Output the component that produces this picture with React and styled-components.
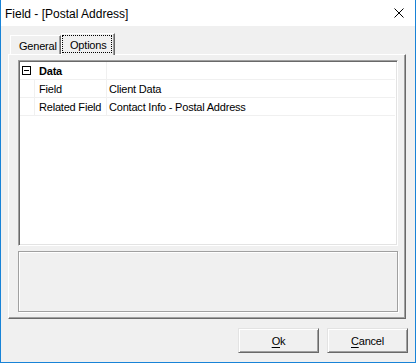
import React, { useState } from 'react'
import styled, { createGlobalStyle } from 'styled-components'

const GlobalStyle = createGlobalStyle`
  html, body {
    margin: 0;
    padding: 0;
    background: #ffffff;
  }
  * {
    box-sizing: border-box;
  }
`

const Window = styled.div`
  width: 416px;
  height: 363px;
  display: flex;
  flex-direction: column;
  background: #f0f0f0;
  border: 1px solid #1883d7;
  border-top: none;
  font-family: "Liberation Sans", Arial, sans-serif;
  font-size: 11px;
  letter-spacing: -0.2px;
  color: #000;
`

const TitleBar = styled.div`
  height: 26px;
  flex: none;
  background: #ffffff;
  display: flex;
  align-items: center;
  justify-content: space-between;
  padding: 0 11px 0 4px;
  font-size: 12px;
  letter-spacing: 0;
`

const Title = styled.span`
  padding-top: 1px;
`

const CloseIcon = () => (
  <svg width="10" height="10" viewBox="0 0 10 10">
    <path d="M0.5 0.5 L9.5 9.5 M9.5 0.5 L0.5 9.5" stroke="#000" strokeWidth="1" fill="none" />
  </svg>
)

const Body = styled.div`
  flex: 1;
  display: flex;
  flex-direction: column;
  padding: 7px 0 0 7px;
`

const TabStrip = styled.div`
  display: flex;
  align-items: flex-end;
  height: 21px;
  padding-left: 2px;
`

const Tab = styled.div`
  position: relative;
  height: ${p => (p.$active ? '22px' : '19px')};
  margin-bottom: ${p => (p.$active ? '-1px' : '0')};
  width: ${p => p.$width}px;
  background: #f0f0f0;
  border-top: 1px solid #ffffff;
  border-left: 1px solid #ffffff;
  border-right: 1px solid #696969;
  box-shadow: inset -1px 0 0 #a0a0a0;
  display: flex;
  padding: ${p => (p.$active ? '1px 2px 2px 0' : '0 2px 0 0')};
  z-index: ${p => (p.$active ? 2 : 1)};
  cursor: default;
`

const FocusRect = styled.span`
  flex: 1;
  display: flex;
  align-items: center;
  padding-left: ${p => p.$indent}px;
  padding-top: 1px;
  outline: ${p => (p.$focused ? '1px dotted #000' : 'none')};
  outline-offset: -1px;
`

const Panel = styled.div`
  position: relative;
  z-index: 1;
  width: 398px;
  height: 265px;
  display: flex;
  flex-direction: column;
  gap: 5px;
  padding: 5px 7px 6px 9px;
  border-top: 1px solid #ffffff;
  border-left: 1px solid #ffffff;
  border-right: 1px solid #696969;
  border-bottom: 1px solid #696969;
  box-shadow: inset -1px -1px 0 #a0a0a0;
`

const Grid = styled.div`
  height: 186px;
  width: 380px;
  background: #ffffff;
  border-top: 1px solid #a0a0a0;
  border-left: 1px solid #a0a0a0;
  border-right: 1px solid #ffffff;
  border-bottom: 1px solid #ffffff;
  box-shadow: inset 1px 1px 0 #696969, inset -1px -1px 0 #e3e3e3;
  padding: 1px 2px 0 1px;
  display: flex;
  flex-direction: column;
`

const Row = styled.div`
  display: grid;
  grid-template-columns: 15px 72px 1fr;
  height: 18px;
  border-bottom: 1px solid #f0f0f0;
`

const Cell = styled.div`
  display: flex;
  align-items: center;
  padding-left: ${p => p.$pad ?? 4}px;
  border-right: ${p => (p.$line ? '1px solid #f0f0f0' : 'none')};
  font-weight: ${p => (p.$bold ? 700 : 400)};
  white-space: nowrap;
  overflow: hidden;
`

const ExpandBox = styled.span`
  width: 9px;
  height: 9px;
  border: 1px solid #000;
  display: flex;
  align-items: center;
  justify-content: center;
  &::after {
    content: '';
    width: 5px;
    height: 1px;
    background: #000;
  }
`

const Description = styled.div`
  height: 61px;
  width: 380px;
  border: 1px solid #a0a0a0;
  box-shadow: 1px 1px 0 #ffffff, inset 1px 1px 0 #ffffff;
`

const ButtonRow = styled.div`
  display: flex;
  justify-content: flex-end;
  gap: 8px;
  padding: 9px 7px 0 0;
`

const Button = styled.button`
  width: 81px;
  height: 25px;
  background: #f0f0f0;
  font-family: "Liberation Sans", Arial, sans-serif;
  font-size: 11px;
  letter-spacing: -0.2px;
  color: #000;
  border-top: 1px solid #e3e3e3;
  border-left: 1px solid #e3e3e3;
  border-right: 1px solid #696969;
  border-bottom: 1px solid #696969;
  box-shadow: inset 1px 1px 0 #ffffff, inset -1px -1px 0 #a0a0a0;
  padding: 0;
  padding-top: 1px;
  cursor: default;
  u {
    text-decoration: underline;
    text-underline-offset: 2px;
  }
`

const rows = [
  { name: 'Field', value: 'Client Data' },
  { name: 'Related Field', value: 'Contact Info - Postal Address' },
]

export default function App() {
  const [tab, setTab] = useState('options')

  return (
    <>
      <GlobalStyle />
      <Window>
        <TitleBar>
          <Title>Field - [Postal Address]</Title>
          <CloseIcon />
        </TitleBar>
        <Body>
          <TabStrip>
            <Tab $width={51} $active={tab === 'general'} onClick={() => setTab('general')}>
              <FocusRect $indent={8} $focused={tab === 'general'}>General</FocusRect>
            </Tab>
            <Tab $width={54} $active={tab === 'options'} onClick={() => setTab('options')}>
              <FocusRect $indent={8} $focused={tab === 'options'}>Options</FocusRect>
            </Tab>
          </TabStrip>
          <Panel>
            <Grid>
              <Row>
                <Cell $pad={2}>
                  <ExpandBox />
                </Cell>
                <Cell $bold $line>Data</Cell>
                <Cell />
              </Row>
              {rows.map(r => (
                <Row key={r.name}>
                  <Cell $line />
                  <Cell $line>{r.name}</Cell>
                  <Cell $pad={2}>{r.value}</Cell>
                </Row>
              ))}
            </Grid>
            <Description />
          </Panel>
          <ButtonRow>
            <Button><u>O</u>k</Button>
            <Button><u>C</u>ancel</Button>
          </ButtonRow>
        </Body>
      </Window>
    </>
  )
}
